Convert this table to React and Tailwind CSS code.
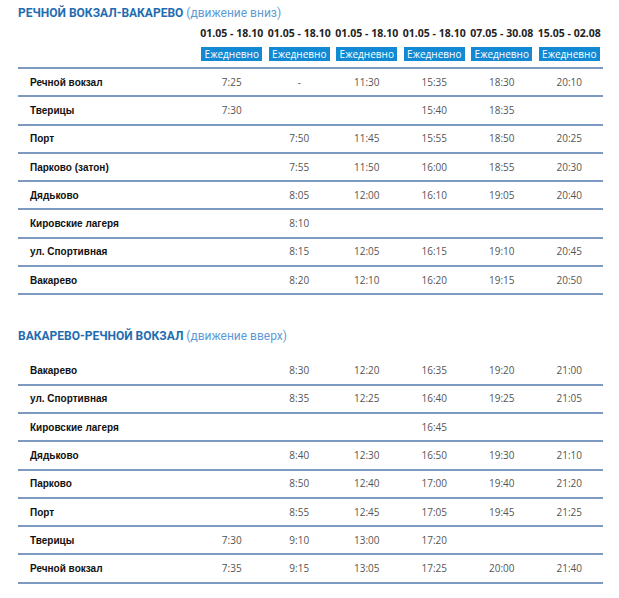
const t1 = [
  ["Речной вокзал", "7:25", "-", "11:30", "15:35", "18:30", "20:10"],
  ["Тверицы", "7:30", "", "", "15:40", "18:35", ""],
  ["Порт", "", "7:50", "11:45", "15:55", "18:50", "20:25"],
  ["Парково (затон)", "", "7:55", "11:50", "16:00", "18:55", "20:30"],
  ["Дядьково", "", "8:05", "12:00", "16:10", "19:05", "20:40"],
  ["Кировские лагеря", "", "8:10", "", "", "", ""],
  ["ул. Спортивная", "", "8:15", "12:05", "16:15", "19:10", "20:45"],
  ["Вакарево", "", "8:20", "12:10", "16:20", "19:15", "20:50"],
];
const t2 = [
  ["Вакарево", "", "8:30", "12:20", "16:35", "19:20", "21:00"],
  ["ул. Спортивная", "", "8:35", "12:25", "16:40", "19:25", "21:05"],
  ["Кировские лагеря", "", "", "", "16:45", "", ""],
  ["Дядьково", "", "8:40", "12:30", "16:50", "19:30", "21:10"],
  ["Парково", "", "8:50", "12:40", "17:00", "19:40", "21:20"],
  ["Порт", "", "8:55", "12:45", "17:05", "19:45", "21:25"],
  ["Тверицы", "7:30", "9:10", "13:00", "17:20", "", ""],
  ["Речной вокзал", "7:35", "9:15", "13:05", "17:25", "20:00", "21:40"],
];
const dates = ["01.05 - 18.10", "01.05 - 18.10", "01.05 - 18.10", "01.05 - 18.10", "07.05 - 30.08", "15.05 - 02.08"];

function Rows({ rows }) {
  return rows.map((r, i) => (
    <div key={i} className="grid grid-cols-[180px_repeat(6,67.5px)] h-[28.3px] border-b-2 border-[#7d9ac0] items-center">
      <div className="pl-3 font-bold text-[10px] text-[#111] font-['Liberation_Sans',sans-serif]">{r[0]}</div>
      {r.slice(1).map((v, j) => (
        <div key={j} className="text-center text-[10px] text-[#555] font-['Open_Sans',sans-serif]">{v}</div>
      ))}
    </div>
  ));
}

function Title({ main, sub }) {
  return (
    <div className="leading-[18px] text-[12px] font-['Roboto',sans-serif]">
      <span className="font-bold text-[#1f6cb0]">{main}</span>{" "}
      <span className="text-[#5d9bd6]">{sub}</span>
    </div>
  );
}

export default function App() {
  return (
    <div className="bg-white w-[619px] h-[598px] pl-[18px] pt-1">
      <div className="w-[585px]">
        <Title main="РЕЧНОЙ ВОКЗАЛ-ВАКАРЕВО" sub="(движение вниз)" />
        <div className="grid grid-cols-[180px_repeat(6,67.5px)] pt-1 pb-[6px] border-b-2 border-[#7d9ac0]">
          <div />
          {dates.map((d, i) => (
            <div key={i} className="flex flex-col items-center gap-[7px]">
              <div className="text-[10.5px] leading-[14px] font-bold text-[#222] font-['Open_Sans',sans-serif]">{d}</div>
              <div className="w-[61px] h-[14px] bg-[#1189d3] text-white text-[10px] leading-[14px] text-center font-['Open_Sans',sans-serif]">Ежедневно</div>
            </div>
          ))}
        </div>
        <Rows rows={t1} />
        <div className="mt-[32px] mb-[12px]">
          <Title main="ВАКАРЕВО-РЕЧНОЙ ВОКЗАЛ" sub="(движение вверх)" />
        </div>
        <Rows rows={t2} />
      </div>
    </div>
  );
}
